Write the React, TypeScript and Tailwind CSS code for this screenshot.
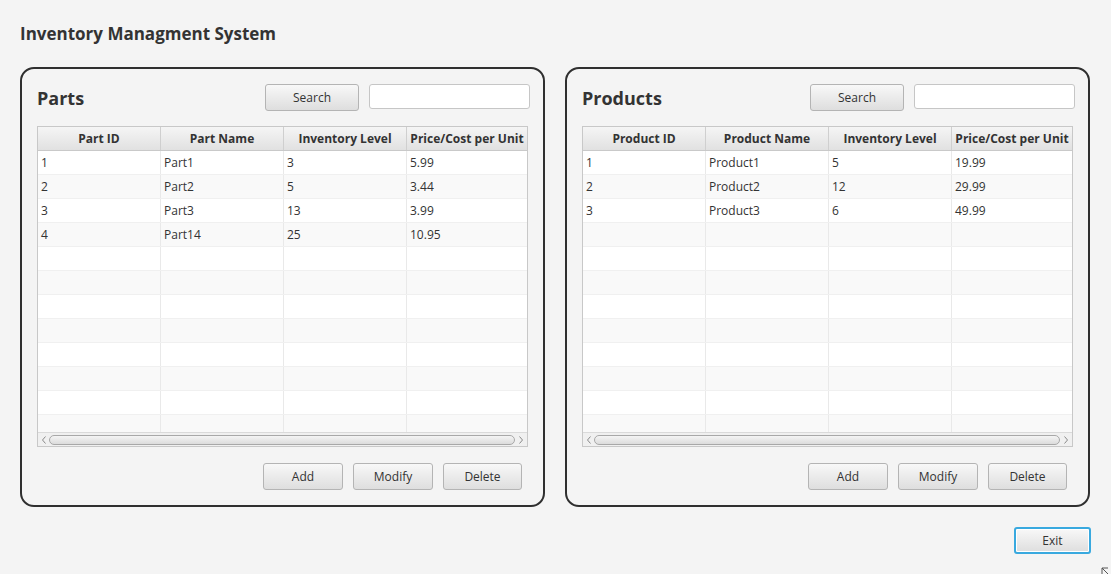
import React from "react";

type Row = string[];

const FONT = { fontFamily: '"Segoe UI", "Open Sans", "Noto Sans", sans-serif' };

function Btn({ label, w, h = 27, focus = false }: { label: string; w: number; h?: number; focus?: boolean }) {
  return (
    <div
      className={
        "flex items-center justify-center rounded-[3px] text-[12px] text-[#333] bg-gradient-to-b from-[#f8f8f8] to-[#dedede] " +
        (focus
          ? "border-2 border-[#39a9df] shadow-[inset_0_0_0_1px_#ffffff]"
          : "border border-[#b4b4b4]")
      }
      style={{ width: w, height: h }}
    >
      {label}
    </div>
  );
}

function Table({ headers, rows }: { headers: string[]; rows: Row[] }) {
  const total = 12;
  const all: Row[] = Array.from({ length: total }, (_, i) => rows[i] ?? ["", "", "", ""]);
  return (
    <div className="mt-[15px] w-[491px] h-[321px] border border-[#c8c8c8] bg-white flex flex-col overflow-hidden">
      <div className="grid grid-cols-[123px_123px_123px_120px] h-[24px] bg-gradient-to-b from-[#f5f5f5] to-[#e1e1e1] border-b border-[#c9c9c9] shrink-0">
        {headers.map((h, i) => (
          <div
            key={i}
            className={
              "flex items-center justify-center pt-[1px] text-[12px] font-bold text-[#333] " +
              (i < 3 ? "border-r border-[#cfcfcf]" : "")
            }
          >
            {h}
          </div>
        ))}
      </div>
      <div className="flex-1 overflow-hidden">
        {all.map((r, ri) => (
          <div
            key={ri}
            className={
              "grid grid-cols-[123px_123px_123px_120px] h-[24px] border-b border-[#f0f0f0] " +
              (ri % 2 === 0 ? "bg-white" : "bg-[#f9f9f9]")
            }
          >
            {r.map((c, ci) => (
              <div
                key={ci}
                className={
                  "flex items-center pl-[3px] text-[12px] text-[#333] " + (ci < 3 ? "border-r border-[#e9e9e9]" : "")
                }
              >
                {c}
              </div>
            ))}
          </div>
        ))}
      </div>
      <div className="h-[14px] shrink-0 bg-[#f0f0f0] border-t border-[#dadada] flex items-center">
        <div className="w-[11px] flex items-center justify-center">
          <svg width="6" height="8" viewBox="0 0 6 8">
            <path d="M4.5 0.5 L1.5 4 L4.5 7.5" fill="none" stroke="#8a8a8a" strokeWidth="1" />
          </svg>
        </div>
        <div className="flex-1 h-[10px] rounded-[5px] border border-[#a8a8a8] bg-gradient-to-b from-[#f4f4f4] to-[#dcdcdc]" />
        <div className="w-[12px] flex items-center justify-center">
          <svg width="6" height="8" viewBox="0 0 6 8">
            <path d="M1.5 0.5 L4.5 4 L1.5 7.5" fill="none" stroke="#8a8a8a" strokeWidth="1" />
          </svg>
        </div>
      </div>
    </div>
  );
}

function Panel({ title, headers, rows }: { title: string; headers: string[]; rows: Row[] }) {
  return (
    <div className="w-[525px] h-[440px] border-2 border-[#2f2f2f] rounded-[14px] pt-[15px] px-[15px] flex flex-col">
      <div className="flex items-center h-[27px]">
        <div className="flex-1 text-[18px] font-bold text-[#333] leading-none">{title}</div>
        <Btn label="Search" w={94} />
        <div className="ml-[10px] mr-[-2px] w-[161px] h-[25px] bg-white border border-[#c6c6c6] rounded-[3px] mt-[-2px]" />
      </div>
      <Table headers={headers} rows={rows} />
      <div className="flex justify-end gap-[10px] mt-[16px] mr-[6px]">
        <Btn label="Add" w={80} />
        <Btn label="Modify" w={80} />
        <Btn label="Delete" w={79} />
      </div>
    </div>
  );
}

export default function App() {
  const parts: Row[] = [
    ["1", "Part1", "3", "5.99"],
    ["2", "Part2", "5", "3.44"],
    ["3", "Part3", "13", "3.99"],
    ["4", "Part14", "25", "10.95"],
  ];
  const products: Row[] = [
    ["1", "Product1", "5", "19.99"],
    ["2", "Product2", "12", "29.99"],
    ["3", "Product3", "6", "49.99"],
  ];
  return (
    <div className="w-[1111px] h-[574px] bg-[#f4f4f4] relative overflow-hidden" style={FONT}>
      <div className="pl-[20px] pt-[22px] h-[67px] text-[17px] font-bold text-[#333] leading-[24px]">
        Inventory Managment System
      </div>
      <div className="flex gap-[20px] pl-[20px]">
        <Panel title="Parts" headers={["Part ID", "Part Name", "Inventory Level", "Price/Cost per Unit"]} rows={parts} />
        <Panel
          title="Products"
          headers={["Product ID", "Product Name", "Inventory Level", "Price/Cost per Unit"]}
          rows={products}
        />
      </div>
      <div className="flex justify-end pr-[20px] mt-[20px]">
        <Btn label="Exit" w={77} focus />
      </div>
      <svg className="absolute right-0 bottom-0" width="10" height="7" viewBox="0 0 10 7">
        <path d="M1 1 H7 M1 1 V7 M1 1 L7 7" fill="none" stroke="#555" strokeWidth="1" />
      </svg>
    </div>
  );
}
